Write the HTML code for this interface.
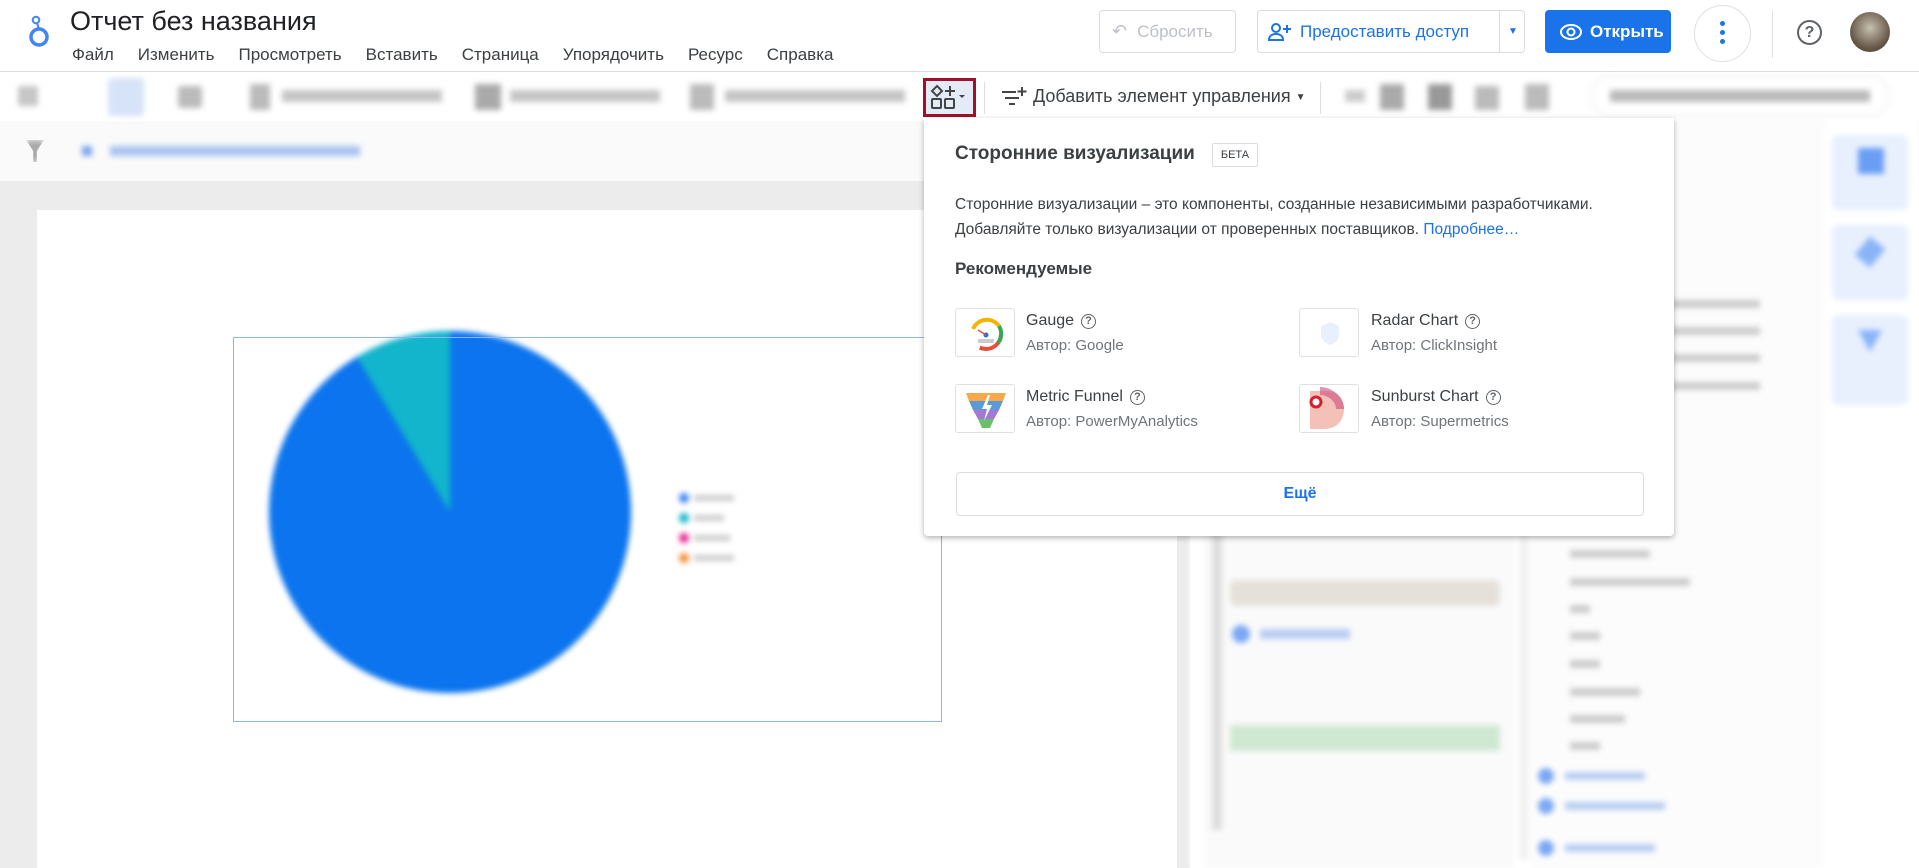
<!DOCTYPE html>
<html><head><meta charset="utf-8"><style>
*{box-sizing:border-box;margin:0;padding:0}
body{width:1919px;height:868px;overflow:hidden;background:#fff;font-family:"Liberation Sans",sans-serif;position:relative;color:#202124}
.a{position:absolute}
.bl{filter:blur(3px)}
.menu span{margin-right:24px}
.btn{position:absolute;border:1px solid #dadce0;border-radius:4px;display:flex;align-items:center;font-size:17px}
.item .ic{position:absolute;width:60px;height:49px;border:1px solid #e0e0e0;border-radius:3px;background:#fff;overflow:hidden}
.nm{position:absolute;font-size:16px;color:#3c4043}
.au{position:absolute;font-size:15px;color:#70757a}
.q{display:inline-block;width:15px;height:15px;border:1.6px solid #5f6368;border-radius:50%;font-size:11px;line-height:12px;text-align:center;color:#5f6368;margin-left:7px;vertical-align:1px;font-weight:bold}
</style></head><body>
<!-- header -->
<svg class="a" style="left:28px;top:14px" width="22" height="34" viewBox="0 0 22 34"><circle cx="11" cy="23" r="8" fill="none" stroke="#4285f4" stroke-width="3.5"/><circle cx="8" cy="6" r="3.3" fill="none" stroke="#4285f4" stroke-width="2"/><line x1="9" y1="9" x2="11" y2="15" stroke="#4285f4" stroke-width="2"/></svg>
<div class="a" style="left:70px;top:6px;font-size:27px;color:#202124">Отчет без названия</div>
<div class="a menu" style="left:72px;top:45px;font-size:17px;color:#3c4043;white-space:nowrap"><span>Файл</span><span>Изменить</span><span>Просмотреть</span><span>Вставить</span><span>Страница</span><span>Упорядочить</span><span>Ресурс</span><span>Справка</span></div>
<div class="btn" style="left:1099px;top:10px;width:137px;height:43px;color:#bdc1c6;padding-left:12px"><span style="font-size:18px;margin-right:10px">↶</span>Сбросить</div>
<div class="btn" style="left:1257px;top:10px;width:268px;height:43px;color:#1a73e8;padding-left:10px"><svg width="24" height="20" viewBox="0 0 24 20" style="margin-right:8px"><circle cx="8" cy="6" r="4" fill="none" stroke="#1a73e8" stroke-width="2"/><path d="M1 18c0-4 3-6 7-6s7 2 7 6z" fill="none" stroke="#1a73e8" stroke-width="2"/><path d="M19 3v8M15 7h8" stroke="#1a73e8" stroke-width="2"/></svg>Предоставить доступ<div style="position:absolute;left:241px;top:0;width:1px;height:41px;background:#dadce0"></div><span style="position:absolute;left:250px;font-size:10px">▼</span></div>
<div class="btn" style="left:1545px;top:10px;width:126px;height:43px;background:#1a73e8;border-color:#1a73e8;color:#fff;font-weight:bold;padding-left:14px"><svg width="22" height="16" viewBox="0 0 22 16" style="margin-right:8px"><ellipse cx="11" cy="8" rx="10" ry="7" fill="none" stroke="#fff" stroke-width="2"/><circle cx="11" cy="8" r="3.5" fill="none" stroke="#fff" stroke-width="2"/></svg>Открыть</div>
<div class="a" style="left:1694px;top:5px;width:57px;height:57px;border:1px solid #e0e0e0;border-radius:50%"><div class="a" style="left:25px;top:15px;width:5px;height:5px;border-radius:50%;background:#1a73e8;box-shadow:0 9px 0 #1a73e8,0 18px 0 #1a73e8"></div></div>
<div class="a" style="left:1772px;top:10px;width:1px;height:48px;background:#e0e0e0"></div>
<div class="a" style="left:1797px;top:20px;width:25px;height:25px;border:2px solid #5f6368;border-radius:50%;text-align:center;font-size:16px;line-height:21px;color:#5f6368;font-weight:bold">?</div>
<div class="a" style="left:1850px;top:12px;width:40px;height:40px;border-radius:50%;background:radial-gradient(circle at 50% 40%,#c8c0b0,#6d5f4f 60%,#3b3027)"></div>
<div class="a" style="left:0;top:71px;width:1919px;height:1px;background:#dadce0"></div>
<!-- toolbar blurred -->
<div class="a bl" style="left:0;top:74px;width:1919px;height:46px">
 <div class="a" style="left:18px;top:12px;width:20px;height:20px;background:#c6c6c6;border-radius:3px"></div>
 <div class="a" style="left:108px;top:4px;width:36px;height:38px;background:#d7e3f8;border-radius:4px"></div>
 <div class="a" style="left:178px;top:12px;width:24px;height:22px;background:#bbb;border-radius:3px"></div>
 <div class="a" style="left:250px;top:10px;width:20px;height:26px;background:#bbb"></div><div class="a" style="left:282px;top:16px;width:160px;height:12px;background:#c4c4c4"></div>
 <div class="a" style="left:475px;top:10px;width:26px;height:26px;background:#aaa"></div><div class="a" style="left:510px;top:16px;width:150px;height:12px;background:#c4c4c4"></div>
 <div class="a" style="left:690px;top:10px;width:24px;height:26px;background:#bbb"></div><div class="a" style="left:725px;top:16px;width:180px;height:12px;background:#c4c4c4"></div>
 <div class="a" style="left:1345px;top:16px;width:20px;height:12px;background:#ccc"></div><div class="a" style="left:1380px;top:10px;width:24px;height:26px;background:#aaa"></div><div class="a" style="left:1428px;top:10px;width:24px;height:26px;background:#999"></div><div class="a" style="left:1475px;top:12px;width:24px;height:24px;background:#bbb"></div><div class="a" style="left:1525px;top:10px;width:24px;height:26px;background:#bbb"></div>
 <div class="a" style="left:1590px;top:2px;width:300px;height:40px;border:1px solid #e0e0e0;border-radius:20px"></div><div class="a" style="left:1610px;top:16px;width:260px;height:12px;background:#bbb"></div>
</div>
<!-- highlighted icon -->
<div class="a" style="left:923px;top:78px;width:53px;height:39px;border:3px solid #a0102a;background:#e3ebf7"></div>
<svg class="a" style="left:930px;top:84px" width="40" height="28" viewBox="0 0 40 28"><path d="M7 2l5 5-5 5-5-5z" fill="none" stroke="#444" stroke-width="2"/><path d="M20 2v10M15 7h10" stroke="#444" stroke-width="2"/><rect x="2" y="15" width="9" height="9" rx="1" fill="none" stroke="#444" stroke-width="2"/><rect x="15" y="15" width="9" height="9" rx="1" fill="none" stroke="#444" stroke-width="2"/><path d="M29 11l3 3 3-3z" fill="#444"/></svg>
<div class="a" style="left:984px;top:82px;width:1px;height:32px;background:#dadce0"></div>
<svg class="a" style="left:1000px;top:86px" width="28" height="24" viewBox="0 0 28 24"><path d="M2 6h14M5 12h14M9 18h6" stroke="#444" stroke-width="2"/><path d="M22 1v9M17.5 5.5h9" stroke="#444" stroke-width="2"/></svg>
<div class="a" style="left:1033px;top:86px;font-size:18px;color:#3c4043">Добавить элемент управления <span style="font-size:10px;vertical-align:2px">▼</span></div>
<div class="a" style="left:1320px;top:82px;width:1px;height:32px;background:#dadce0"></div>
<!-- filter row -->
<div class="a" style="left:0;top:121px;width:1919px;height:60px;background:#fafafa"></div>
<div class="a bl" style="left:26px;top:140px;width:18px;height:22px;background:#aaa;clip-path:polygon(0 0,100% 0,60% 50%,60% 100%,40% 100%,40% 50%)"></div>
<div class="a bl" style="left:82px;top:146px;width:10px;height:10px;background:#7aa5ea"></div><div class="a bl" style="left:110px;top:146px;width:250px;height:10px;background:#a8c3f0"></div>
<!-- canvas -->
<div class="a" style="left:0;top:181px;width:1190px;height:687px;background:#ececec"></div>
<div class="a" style="left:37px;top:210px;width:1140px;height:658px;background:#fff"></div>
<div class="a bl" style="left:0;top:0;width:1919px;height:868px;pointer-events:none">
<svg class="a" style="left:0;top:0" width="1919" height="868">
 <circle cx="450" cy="512" r="181" fill="#0b74ee"/>
 <path d="M450 512 L450 331 A181 181 0 0 0 357 357 Z" fill="#12b5cb"/>
 <circle cx="684" cy="498" r="5" fill="#3b82f6"/><rect x="694" y="495" width="40" height="6" fill="#ccc"/>
 <circle cx="684" cy="518" r="5" fill="#12b5cb"/><rect x="694" y="515" width="30" height="6" fill="#ccc"/>
 <circle cx="684" cy="538" r="5" fill="#e52592"/><rect x="694" y="535" width="36" height="6" fill="#ccc"/>
 <circle cx="684" cy="558" r="5" fill="#f58b34"/><rect x="694" y="555" width="40" height="6" fill="#ccc"/>
</svg>
</div>
<div class="a" style="left:233px;top:337px;width:709px;height:385px;border:1px solid #8ab4f8"></div>
<!-- right panels (blurred) -->
<div class="a bl" style="left:1190px;top:120px;width:729px;height:748px">
 <div class="a" style="left:0;top:0;width:729px;height:748px;background:#fff"></div>
 <div class="a" style="left:10px;top:90px;width:500px;height:40px;background:#f1f3f4"></div>
 <div class="a" style="left:14px;top:400px;width:310px;height:348px;background:#fafafa"></div>
 <div class="a" style="left:22px;top:410px;width:10px;height:300px;background:#ddd"></div>
 <div class="a" style="left:40px;top:460px;width:270px;height:26px;background:#e6e0da;border-radius:6px"></div>
 <div class="a" style="left:42px;top:505px;width:18px;height:18px;border-radius:50%;background:#7aa8f5"></div><div class="a" style="left:70px;top:509px;width:90px;height:10px;background:#b8cdf2"></div>
 <div class="a" style="left:40px;top:605px;width:270px;height:26px;background:#cfe8d2"></div>
 <div class="a" style="left:330px;top:120px;width:8px;height:620px;background:#f0f0f0"></div>
 <div class="a" style="left:340px;top:0;width:300px;height:748px;background:#fcfcfc"></div>
 <div class="a" style="left:370px;top:180px;width:200px;height:8px;background:#ccc"></div><div class="a" style="left:370px;top:207px;width:200px;height:8px;background:#ccc"></div><div class="a" style="left:370px;top:234px;width:200px;height:8px;background:#ccc"></div><div class="a" style="left:370px;top:262px;width:200px;height:8px;background:#ccc"></div>
 <div class="a" style="left:380px;top:430px;width:80px;height:8px;background:#ccc"></div><div class="a" style="left:380px;top:458px;width:120px;height:8px;background:#ccc"></div><div class="a" style="left:380px;top:485px;width:20px;height:8px;background:#ccc"></div><div class="a" style="left:380px;top:512px;width:30px;height:8px;background:#ccc"></div><div class="a" style="left:380px;top:540px;width:30px;height:8px;background:#ccc"></div><div class="a" style="left:380px;top:568px;width:70px;height:8px;background:#ccc"></div><div class="a" style="left:380px;top:595px;width:55px;height:8px;background:#ccc"></div><div class="a" style="left:380px;top:622px;width:30px;height:8px;background:#ccc"></div>
 <div class="a" style="left:348px;top:648px;width:16px;height:16px;border-radius:50%;background:#7aa8f5"></div><div class="a" style="left:375px;top:652px;width:80px;height:8px;background:#b8cdf2"></div>
 <div class="a" style="left:348px;top:678px;width:16px;height:16px;border-radius:50%;background:#7aa8f5"></div><div class="a" style="left:375px;top:682px;width:100px;height:8px;background:#b8cdf2"></div>
 <div class="a" style="left:348px;top:720px;width:16px;height:16px;border-radius:50%;background:#7aa8f5"></div><div class="a" style="left:375px;top:724px;width:90px;height:8px;background:#b8cdf2"></div>
 <div class="a" style="left:634px;top:0;width:95px;height:748px;background:#fff"></div>
 <div class="a" style="left:642px;top:15px;width:76px;height:75px;background:#e8f0fe;border-radius:6px"></div><div class="a" style="left:668px;top:28px;width:26px;height:26px;background:#6a9ef5"></div>
 <div class="a" style="left:642px;top:105px;width:76px;height:75px;background:#e8f0fe;border-radius:6px"></div><div class="a" style="left:670px;top:120px;width:20px;height:24px;background:#8ab4f8;transform:rotate(40deg)"></div>
 <div class="a" style="left:642px;top:195px;width:76px;height:90px;background:#e8f0fe;border-radius:6px"></div><div class="a" style="left:668px;top:210px;width:24px;height:22px;background:#8ab4f8;clip-path:polygon(0 0,100% 0,50% 100%)"></div>
</div>
<!-- dropdown -->
<div class="a" style="left:924px;top:118px;width:750px;height:418px;background:#fff;box-shadow:0 2px 6px rgba(0,0,0,.3);border-radius:0 0 4px 4px">
 <div class="a" style="left:31px;top:25px;font-size:19px;font-weight:bold;color:#3c4043">Сторонние визуализации</div>
 <div class="a" style="left:288px;top:25px;width:46px;height:24px;border:1px solid #dadce0;border-radius:2px;font-size:11px;text-align:center;line-height:22px;color:#3c4043">БЕТА</div>
 <div class="a" style="left:31px;top:74px;font-size:15.5px;color:#3c4043;line-height:25px;white-space:nowrap">Сторонние визуализации – это компоненты, созданные независимыми разработчиками.<br>Добавляйте только визуализации от проверенных поставщиков. <span style="color:#1a73e8">Подробнее…</span></div>
 <div class="a" style="left:31px;top:141px;font-size:17px;font-weight:bold;color:#3c4043">Рекомендуемые</div>
 <div class="item">
  <div class="ic" style="left:31px;top:190px"><svg width="60" height="49" viewBox="0 0 60 49"><circle cx="30" cy="25" r="15" fill="none" stroke="#e74c3c" stroke-width="4" stroke-dasharray="30 100"/><path d="M17 20 A15 15 0 0 1 43 17" fill="none" stroke="#f4b400" stroke-width="4"/><path d="M43 17 A15 15 0 0 1 42 34" fill="none" stroke="#34a853" stroke-width="4"/><circle cx="30" cy="25" r="11" fill="#fff"/><circle cx="30" cy="26" r="2.5" fill="#1a73e8"/><line x1="22" y1="21" x2="30" y2="26" stroke="#e74c3c" stroke-width="1.5"/><rect x="22" y="30" width="16" height="4" fill="#ccc"/></svg></div>
  <div class="nm" style="left:102px;top:194px">Gauge<span class="q">?</span></div><div class="au" style="left:102px;top:219px">Автор: Google</div>
  <div class="ic" style="left:375px;top:190px"><svg width="60" height="49"><path d="M30 13l9 4v9c0 5-4 8-9 10-5-2-9-5-9-10v-9z" fill="#e8f0fe"/></svg></div>
  <div class="nm" style="left:447px;top:194px">Radar Chart<span class="q">?</span></div><div class="au" style="left:447px;top:219px">Автор: ClickInsight</div>
  <div class="ic" style="left:31px;top:266px"><svg width="60" height="49"><path d="M10 8h40l-3 8H13z" fill="#f6a84b"/><path d="M13 16h34l-4 9H17z" fill="#5b9bd5"/><path d="M17 25h26l-5 9H22z" fill="#a678d6"/><path d="M22 34h16l-4 9h-8z" fill="#6abf69"/><path d="M32 10l-6 14h5l-3 12 8-16h-5l3-10z" fill="#fff"/></svg></div>
  <div class="nm" style="left:102px;top:270px">Metric Funnel<span class="q">?</span></div><div class="au" style="left:102px;top:295px">Автор: PowerMyAnalytics</div>
  <div class="ic" style="left:375px;top:266px"><svg width="60" height="49"><path d="M10 6h16c12 0 18 8 18 18s-6 20-20 20H10z" fill="#f3c1b8"/><path d="M20 6c10 0 20 8 20 18" fill="none" stroke="#c94f7c" stroke-width="8" opacity=".6"/><circle cx="16" cy="17" r="5" fill="#fff" stroke="#d61f2b" stroke-width="3"/></svg></div>
  <div class="nm" style="left:447px;top:270px">Sunburst Chart<span class="q">?</span></div><div class="au" style="left:447px;top:295px">Автор: Supermetrics</div>
 </div>
 <div class="a" style="left:32px;top:354px;width:688px;height:44px;border:1px solid #dadce0;border-radius:4px;text-align:center;line-height:42px;font-size:16px;font-weight:bold;color:#1a73e8">Ещё</div>
</div>
</body></html>
